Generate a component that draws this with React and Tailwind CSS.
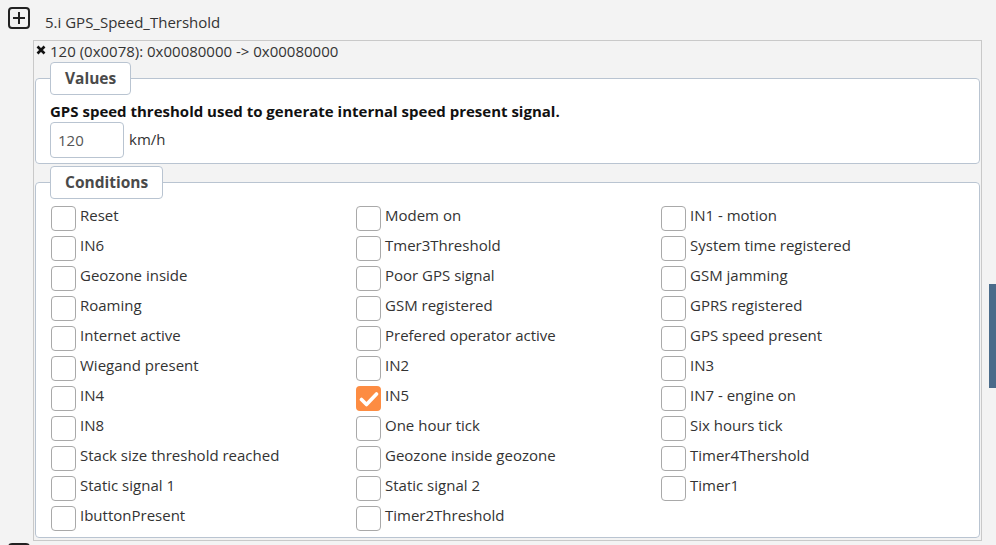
import React from 'react';

const conditions = [
  'Reset', 'Modem on', 'IN1 - motion',
  'IN6', 'Tmer3Threshold', 'System time registered',
  'Geozone inside', 'Poor GPS signal', 'GSM jamming',
  'Roaming', 'GSM registered', 'GPRS registered',
  'Internet active', 'Prefered operator active', 'GPS speed present',
  'Wiegand present', 'IN2', 'IN3',
  'IN4', 'IN5', 'IN7 - engine on',
  'IN8', 'One hour tick', 'Six hours tick',
  'Stack size threshold reached', 'Geozone inside geozone', 'Timer4Thershold',
  'Static signal 1', 'Static signal 2', 'Timer1',
  'IbuttonPresent', 'Timer2Threshold',
];

const checked = ['IN5'];

const PlusBox = () => (
  <div className="w-[22px] h-[22px] border-2 border-[#222] rounded-[4px] flex items-center justify-center shrink-0">
    <svg width="14" height="14" viewBox="0 0 14 14">
      <path d="M7 1v12M1 7h12" stroke="#222" strokeWidth="2" />
    </svg>
  </div>
);

const Checkbox = ({ on }) => (
  <div
    className={
      on
        ? 'w-[25px] h-[25px] rounded-[4px] bg-[#fd8c42] flex items-center justify-center shrink-0'
        : 'w-[25px] h-[25px] rounded-[4px] border border-[#a9a9a9] bg-white shrink-0'
    }
  >
    {on && (
      <svg width="20" height="16" viewBox="0 0 20 16">
        <path d="M2.5 8.5l5 5L17.5 3" fill="none" stroke="#fff" strokeWidth="3.6" strokeLinecap="round" strokeLinejoin="round" />
      </svg>
    )}
  </div>
);

const Legend = ({ children }) => (
  <legend className="ml-0 px-[14px] py-[5px] bg-white border border-[#b9c4d1] rounded-[4px] text-[15.5px] leading-[21px] font-bold text-[#4a4a4a]">
    {children}
  </legend>
);

const App = () => {
  return (
    <div
      className="relative min-h-[545px] h-[545px] overflow-hidden bg-[#f3f3f3] text-[15px] text-[#333]"
      style={{ fontFamily: '"Open Sans", "Noto Sans", sans-serif' }}
    >
      <div className="mt-[7px] ml-[8px] h-[22px] flex items-start gap-[15px]">
        <PlusBox />
        <span className="leading-[22px] mt-[4px]">5.i GPS_Speed_Thershold</span>
      </div>

      <div className="ml-[33px] mr-[14px] mt-[11px] border border-[#c9c9c9] bg-[#f3f3f3] pl-px pr-px pb-[2px]">
        <div className="flex items-center h-[21px] gap-[4px] pl-[1px]">
          <svg width="10" height="10" viewBox="0 0 10 10" className="-mt-[3px]">
            <path d="M1.5 1.5l7 7M8.5 1.5l-7 7" stroke="#111" strokeWidth="2.6" />
          </svg>
          <span className="leading-[21px]">120 (0x0078): 0x00080000 -&gt; 0x00080000</span>
        </div>

        <fieldset className="border border-[#b9c4d1] rounded-[4px] bg-white px-[14px] pt-[6px] pb-[5px]">
          <Legend>Values</Legend>
          <div className="font-bold text-[#111] leading-[21px]">
            GPS speed threshold used to generate internal speed present signal.
          </div>
          <div className="flex items-center gap-[5px]">
            <div className="w-[74px] h-[36px] border border-[#b9c4d1] rounded-[4px] flex items-center pl-[7px] text-[#555]">
              120
            </div>
            <span className="text-[#333] -mt-[2px]">km/h</span>
          </div>
        </fieldset>

        <fieldset className="mt-[2px] border border-[#b9c4d1] rounded-[4px] bg-white px-[14px] pt-[7px] pb-px">
          <Legend>Conditions</Legend>
          <div className="grid grid-cols-3">
            {conditions.map((c) => (
              <div key={c} className="h-[30px] flex items-start gap-[4px] pl-px">
                <Checkbox on={checked.includes(c)} />
                <span className="leading-[20px] text-[#333] -mt-px">{c}</span>
              </div>
            ))}
          </div>
        </fieldset>
      </div>

      <div className="pl-[8px] mt-[2px]">
        <PlusBox />
      </div>

      <div className="absolute right-0 top-[284px] w-[7px] h-[104px] bg-[#4a6b8a]" />
    </div>
  );
};

export default App;
